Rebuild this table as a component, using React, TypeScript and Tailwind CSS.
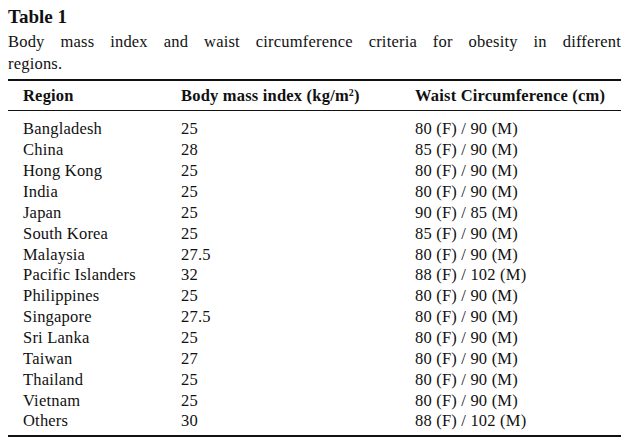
const rows: [string, string, string][] = [
  ['Bangladesh', '25', '80 (F) / 90 (M)'],
  ['China', '28', '85 (F) / 90 (M)'],
  ['Hong Kong', '25', '80 (F) / 90 (M)'],
  ['India', '25', '80 (F) / 90 (M)'],
  ['Japan', '25', '90 (F) / 85 (M)'],
  ['South Korea', '25', '85 (F) / 90 (M)'],
  ['Malaysia', '27.5', '80 (F) / 90 (M)'],
  ['Pacific Islanders', '32', '88 (F) / 102 (M)'],
  ['Philippines', '25', '80 (F) / 90 (M)'],
  ['Singapore', '27.5', '80 (F) / 90 (M)'],
  ['Sri Lanka', '25', '80 (F) / 90 (M)'],
  ['Taiwan', '27', '80 (F) / 90 (M)'],
  ['Thailand', '25', '80 (F) / 90 (M)'],
  ['Vietnam', '25', '80 (F) / 90 (M)'],
  ['Others', '30', '88 (F) / 102 (M)'],
];

export default function App() {
  return (
    <div className="w-[629px] h-[446px] bg-white px-2 pt-[6px] text-[#111] font-['Liberation_Serif',serif] text-[16.5px] tracking-[0.2px]">
      <div className="text-[19px] font-bold leading-[22px] tracking-normal">Table 1</div>
      <div className="mt-[3px] leading-[22.3px]">
        <div className="text-justify [text-align-last:justify]">
          Body mass index and waist circumference criteria for obesity in different
        </div>
        <div>regions.</div>
      </div>

      <div className="mt-[3.4px] border-t-2 border-b-2 border-[#111]">
        <div className="grid grid-cols-[158px_234px_1fr] pl-[15px] pt-[5px] pb-[3.6px] font-bold leading-[20.86px] border-b-[1.5px] border-[#111]">
          <div>Region</div>
          <div>
            Body mass index (kg/m<sup className="text-[10px]">2</sup>)
          </div>
          <div>Waist Circumference (cm)</div>
        </div>
        <div className="pt-[8px] pb-[2.8px] leading-[20.86px]">
          {rows.map(([region, bmi, waist]) => (
            <div key={region} className="grid grid-cols-[158px_234px_1fr] pl-[15px]">
              <div>{region}</div>
              <div>{bmi}</div>
              <div>{waist}</div>
            </div>
          ))}
        </div>
      </div>
    </div>
  );
}
